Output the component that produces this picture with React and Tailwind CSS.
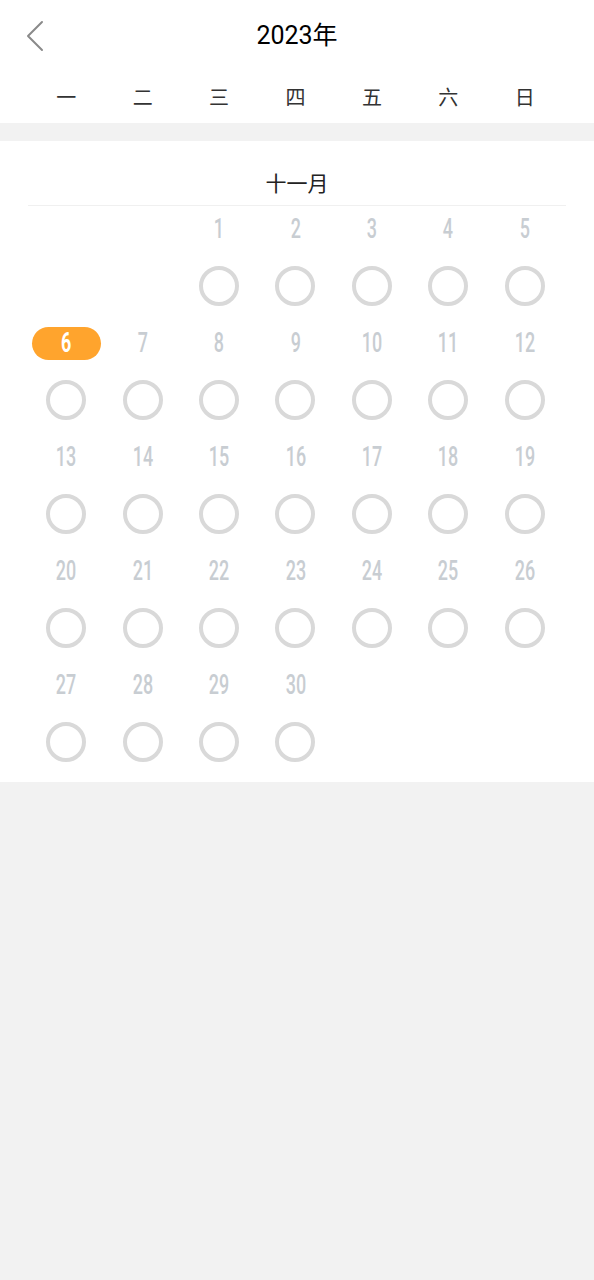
const WEEKDAYS = ['一', '二', '三', '四', '五', '六', '日'];

// November 2023 starts on Wednesday
const LEADING = 2;
const DAYS = 30;
const TODAY = 6;

function buildCells() {
  const cells = [];
  for (let i = 0; i < LEADING; i++) cells.push(null);
  for (let d = 1; d <= DAYS; d++) cells.push(d);
  return cells;
}

function DayCell({ day }) {
  if (!day) return <div />;
  const isToday = day === TODAY;
  return (
    <div className="flex flex-col items-center">
      <div className="h-[46px] flex items-center justify-center">
        {isToday ? (
          <span className="w-[69px] h-[33px] rounded-full bg-[#ffa42d] text-white flex items-center justify-center">
            <span className="inline-block scale-x-[0.64] text-[28px] font-bold leading-none">{day}</span>
          </span>
        ) : (
          <span className="inline-block scale-x-[0.64] text-[#c8cdd2] text-[28px] font-medium leading-none">
            {day}
          </span>
        )}
      </div>
      <div className="mt-[14px] mb-[14px] w-[40px] h-[40px] rounded-full border-[4px] border-[#d9d9d9]" />
    </div>
  );
}

export default function App() {
  const cells = buildCells();
  return (
    <div className="min-h-[1280px] bg-[#f2f2f2] [font-family:Roboto,'Noto_Sans_CJK_SC',sans-serif]">
      <div className="bg-white">
        {/* Header */}
        <div className="relative h-[72px] flex items-center justify-center">
          <button className="absolute left-[7px] top-[8px] text-[#8a8a8a]">
            <svg width="56" height="56" viewBox="0 0 24 24" fill="none" stroke="currentColor" strokeWidth="0.85" strokeLinecap="round" strokeLinejoin="round">
              <path d="m15 18-6-6 6-6" />
            </svg>
          </button>
          <h1 className="text-[25px] text-black">2023年</h1>
        </div>

        {/* Weekdays */}
        <div className="h-[51px] pl-[28px] pr-[31px] grid grid-cols-7 items-center">
          {WEEKDAYS.map((w) => (
            <div key={w} className="text-center text-[20px] text-[#333]">
              {w}
            </div>
          ))}
        </div>
      </div>

      <div className="h-[18px] bg-[#f2f2f2]" />

      {/* Month card */}
      <div className="bg-white pb-[6px]">
        <div className="mx-[28px] pt-[30px] pb-[8px] border-b border-[#f0f0f0] text-center text-[21px] leading-[26px] text-[#222]">
          十一月
        </div>
        <div className="pl-[28px] pr-[31px] grid grid-cols-7">
          {cells.map((d, i) => (
            <DayCell key={i} day={d} />
          ))}
        </div>
      </div>
    </div>
  );
}
